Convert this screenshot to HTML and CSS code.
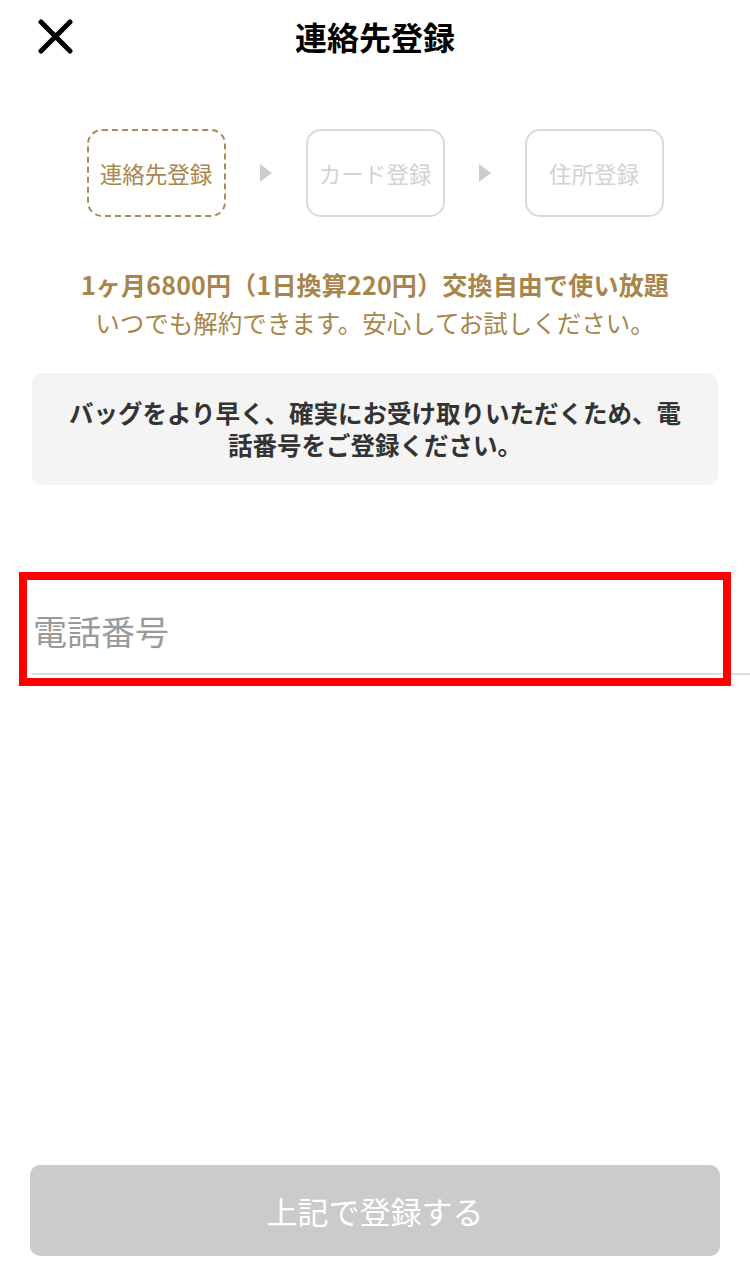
FILE: index.html
```html
<!DOCTYPE html>
<html lang="ja">
<head>
<meta charset="utf-8">
<title>連絡先登録</title>
<link rel="stylesheet" href="styles.css">
</head>
<body>
<div class="page">
  <header class="header">
    <button class="close" aria-label="閉じる">
      <svg width="35" height="35" viewBox="0 0 35 35"><path d="M3 3 L32 32 M32 3 L3 32" stroke="#000" stroke-width="5" stroke-linecap="round" fill="none"/></svg>
    </button>
    <h1 class="title">連絡先登録</h1>
    <span></span>
  </header>

  <div class="steps">
    <div class="step active">連絡先登録</div>
    <span class="arrow"></span>
    <div class="step">カード登録</div>
    <span class="arrow"></span>
    <div class="step">住所登録</div>
  </div>

  <div class="promo">
    <p class="promo-main">1ヶ月6800円（1日換算220円）交換自由で使い放題</p>
    <p class="promo-sub">いつでも解約できます。安心してお試しください。</p>
  </div>

  <div class="notice">バッグをより早く、確実にお受け取りいただくため、電<br>話番号をご登録ください。</div>

  <div class="field">
    <input class="phone" type="tel" placeholder="電話番号">
    <div class="highlight"></div>
  </div>

  <button class="submit" disabled>上記で登録する</button>
</div>
</body>
</html>
```

FILE: styles.css
```css
* { box-sizing: border-box; }
html, body { margin: 0; padding: 0; background: #fff; }
body {
  font-family: "Noto Sans CJK JP", "Noto Sans", sans-serif;
  color: #333;
}
.page {
  width: 750px;
  min-height: 1287px;
  display: flex;
  flex-direction: column;
  position: relative;
}
.header {
  display: grid;
  grid-template-columns: 1fr auto 1fr;
  align-items: center;
  height: 72px;
  padding: 0 38px;
}
.close {
  border: 0;
  background: none;
  padding: 0;
  width: 35px;
  height: 35px;
  display: flex;
}
.title {
  margin: 0;
  font-size: 32px;
  font-weight: 700;
  color: #000;
  line-height: 1;
  letter-spacing: 0;
}
.steps {
  margin-top: 57px;
  display: flex;
  justify-content: center;
  align-items: center;
  gap: 34px;
}
.step {
  width: 139px;
  height: 88px;
  border: 2px solid #dadada;
  border-radius: 15px;
  display: flex;
  align-items: center;
  justify-content: center;
  font-size: 22.5px;
  color: #d2d2d2;
}
.step.active {
  border: 2px dashed #a88a55;
  color: #a8864e;
}
.arrow {
  width: 0;
  height: 0;
  border-top: 9px solid transparent;
  border-bottom: 9px solid transparent;
  border-left: 12px solid #cccccc;
}
.promo {
  margin-top: 49px;
  text-align: center;
  color: #a8854b;
}
.promo p { margin: 0; }
.promo-main {
  font-size: 25px;
  font-weight: 700;
  line-height: 36px;
  letter-spacing: 0.2px;
}
.promo-sub {
  font-size: 24.5px;
  line-height: 42px;
  letter-spacing: 0;
}
.notice {
  margin: 29px 32px 0;
  background: #f4f4f4;
  border-radius: 10px;
  padding: 24px 16px;
  text-align: center;
  font-size: 24.5px;
  font-weight: 700;
  line-height: 32px;
  color: #333;
}
.field {
  position: relative;
  margin-top: 87px;
  margin-left: 32px;
  height: 103px;
  border-bottom: 2px solid #dcdce4;
}
.phone {
  width: 100%;
  height: 100%;
  border: 0;
  outline: none;
  padding: 16px 0 0 1px;
  font-family: "Noto Sans CJK JP", "Noto Sans", sans-serif;
  font-size: 34px;
  color: #333;
  background: transparent;
}
.phone::placeholder { color: #9a9a9a; }
.highlight {
  position: absolute;
  left: -13px;
  top: 0;
  width: 712px;
  height: 114px;
  border: 8px solid #ff0000;
  pointer-events: none;
}
.submit {
  margin: auto 30px 31px;
  height: 91px;
  border: 0;
  border-radius: 10px;
  background: #cbcbcb;
  color: #fff;
  font-family: "Noto Sans CJK JP", "Noto Sans", sans-serif;
  font-size: 31px;
  letter-spacing: 0;
}
```
